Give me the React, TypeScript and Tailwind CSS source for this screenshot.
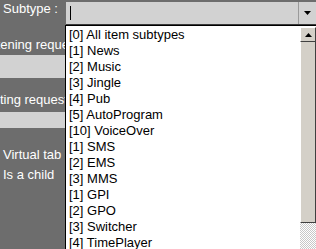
const items = [
  "[0] All item subtypes",
  "[1] News",
  "[2] Music",
  "[3] Jingle",
  "[4] Pub",
  "[5] AutoProgram",
  "[10] VoiceOver",
  "[1] SMS",
  "[2] EMS",
  "[3] MMS",
  "[1] GPI",
  "[2] GPO",
  "[3] Switcher",
  "[4] TimePlayer",
];

export default function App() {
  return (
    <div className="relative h-[249px] w-[316px] overflow-hidden bg-[#6d6d6d] font-['Liberation_Sans',Arial,sans-serif] text-[13px] leading-[17px]">
      {/* subtype row with combo */}
      <div className="flex h-[27px] items-start">
        <div className="w-[66px] whitespace-nowrap pl-[3px] text-white">Subtype :</div>
        <div className="mt-[2px] flex h-[23px] flex-1 items-center border-b border-[#3a3a3a] bg-[#d2d2d2]">
          <span className="ml-[4px] h-[14px] w-px bg-black" />
          <div className="ml-auto flex h-full w-[18px] items-center justify-center border-l border-[#9a9a9a]">
            <svg width="7" height="4" viewBox="0 0 7 4">
              <path d="M0 0h7L3.5 4z" fill="#000" />
            </svg>
          </div>
        </div>
      </div>

      {/* labels are partly hidden behind the open list */}
      <div className="flex h-[28px] w-[65px] items-end overflow-hidden pb-[2px]">
        <span className="-ml-[20px] whitespace-nowrap text-white">Listening requests</span>
      </div>
      <div className="h-[23px] bg-[#d2d2d2]" />
      <div className="flex h-[34px] w-[65px] items-end overflow-hidden pb-[4px]">
        <span className="-ml-[22px] whitespace-nowrap text-white">Waiting requests</span>
      </div>
      <div className="h-[16px] bg-[#d2d2d2]" />
      <div className="pl-[3px] pt-[18px] text-white">
        <div className="h-[20px] whitespace-nowrap">Virtual tab</div>
        <div className="h-[20px] whitespace-nowrap">Is a child</div>
      </div>

      {/* open dropdown list */}
      <div className="absolute left-[65px] top-[25px] flex h-[230px] w-[251px] border-l border-t border-black bg-white">
        <div className="flex-1 overflow-hidden pl-[3px] pt-[1px] text-black">
          {items.map((it, i) => (
            <div key={i} className="h-[16px] whitespace-nowrap leading-[16px]">
              {it}
            </div>
          ))}
        </div>
        <div className="flex w-[16px] flex-col pt-[1px]">
          <div className="flex h-[15px] items-center justify-center border-t border-r border-b border-l border-t-white border-l-white border-r-[#404040] border-b-[#404040] bg-[#d4d0c8]">
            <svg width="7" height="4" viewBox="0 0 7 4">
              <path d="M3.5 0L7 4H0z" fill="#000" />
            </svg>
          </div>
          <div className="h-[181px] border-r border-b border-l border-l-white border-r-[#404040] border-b-[#404040] bg-[#d4d0c8]" />
          <div className="flex-1 bg-[repeating-conic-gradient(#c8c8c8_0_25%,#ffffff_0_50%)] bg-[length:2px_2px]" />
        </div>
      </div>
    </div>
  );
}
